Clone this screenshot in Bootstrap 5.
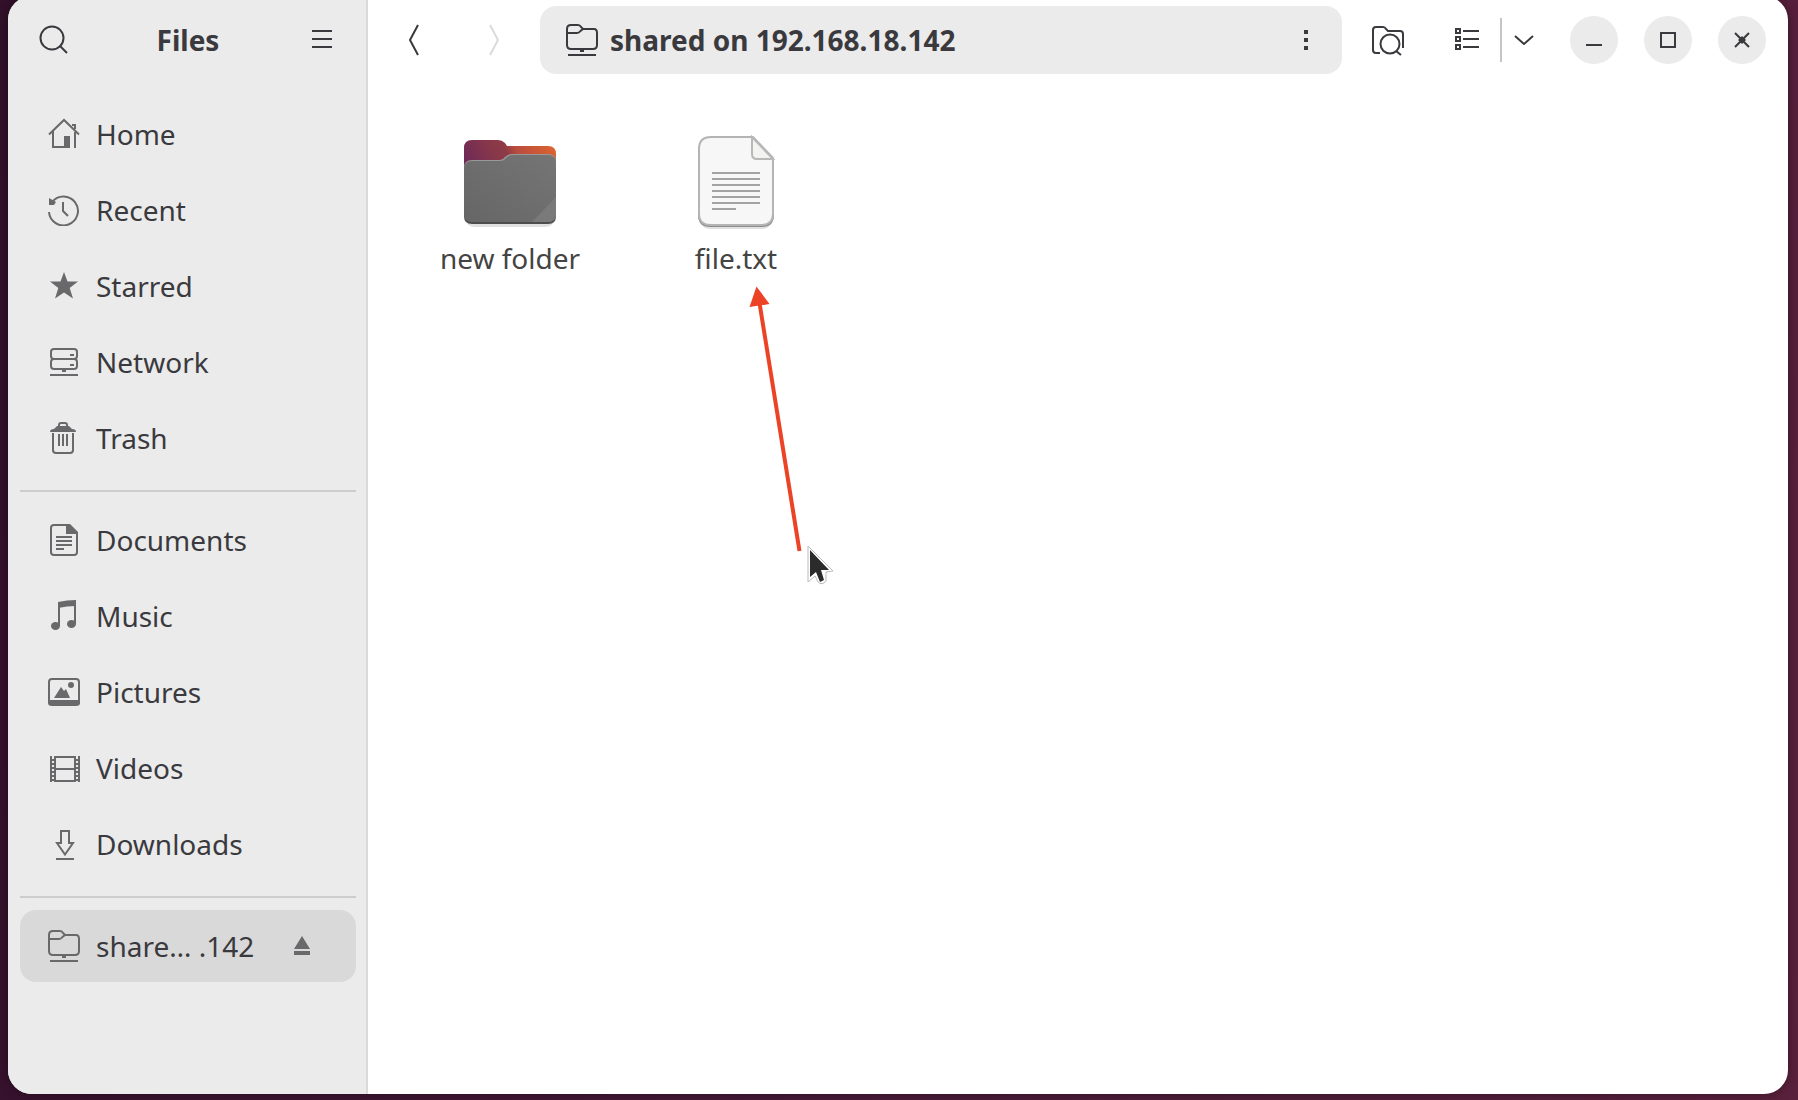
<!DOCTYPE html>
<html lang="en">
<head>
<meta charset="utf-8">
<meta name="viewport" content="width=device-width, initial-scale=1">
<title>Files</title>
<link href="https://cdn.jsdelivr.net/npm/bootstrap@5.3.0/dist/css/bootstrap.min.css" rel="stylesheet">
<style>
  body {
    font-family: "Noto Sans", "Open Sans", sans-serif;
    font-size: 28px;
    line-height: 36px;
    color: #3a3a3e;
    background: linear-gradient(100deg, #33102b 0%, #481b39 50%, #5a213c 100%);
  }
  .desktop { padding: 0 10px 6px 8px; }
  .app-window {
    margin-top: -4px;
    border-radius: 24px;
    background: #fff;
    box-shadow: 0 0 12px rgba(0, 0, 0, .4);
  }
  .side-pane { width: 360px; background: #ebebeb; border-right: 2px solid #dadada; padding: 0 10px 12px 12px; }
  .head-row { height: 84px; padding-top: 4px; }
  .title-text { font-size: 28px; line-height: 36px; }
  .tool-btn {
    width: 68px; height: 68px; padding: 0; border: 0; border-radius: 16px;
    display: flex; align-items: center; justify-content: center; color: #3a3a3e;
  }
  .tool-btn:disabled { color: #3a3a3e; border: 0; opacity: .18; }
  .view-btn { width: 66px; }
  .more-btn { width: 44px; }
  .win-btn { width: 48px; height: 48px; border-radius: 50%; background: #ebebeb; }
  .split-line { width: 2px; height: 44px; background: #c4c4c4; }
  .path-bar { height: 68px; background: #ebebeb; border-radius: 16px; padding: 0 2px 0 26px; }
  .main-head { padding-left: 12px; padding-right: 22px; gap: 12px; }
  .win-group { gap: 26px; margin-left: 12px; }
  .place-nav { padding-top: 18px; }
  .place-row {
    height: 72px; margin-bottom: 4px; padding: 0 0 0 28px; gap: 16px; border-radius: 16px;
    color: #3a3a3e; text-decoration: none;
  }
  .place-row svg { color: #69696b; }
  .place-row.current { background: #d9d9d9; }
  .place-row a { color: inherit; text-decoration: none; gap: 16px; }
  .eject-btn { width: 44px; margin-right: 32px; }
  .place-sep { height: 2px; background: #cdcdcd; margin: 12px 0; }
  .file-view { padding: 54px 35px; gap: 12px; }
  .file-tile { width: 214px; color: #444; text-decoration: none; gap: 10px; }
  .pointer-layer { left: 380px; top: 200px; pointer-events: none; }
  svg { display: block; flex: none; }
  .ln { fill: none; stroke: currentColor; stroke-width: 2; }
</style>
</head>
<body class="min-vh-100">
<svg width="0" height="0" class="position-absolute" aria-hidden="true">
  <symbol id="remote-folder" viewBox="0 0 32 32">
    <path class="ln" d="M1 9V5Q1 1 5 1H12Q14 1 15 3L17 5H28Q31 5 31 9V21Q31 25 27 25H5Q1 25 1 21V9H11Q13 9 14.500 7L17 5M2 31H30"/>
    <path fill="currentColor" d="M14 26h4v2h-4z"/>
  </symbol>
</svg>
<div class="desktop min-vh-100 d-flex">
<div class="app-window d-flex flex-grow-1 overflow-hidden">

  <aside class="side-pane flex-shrink-0">
    <header class="head-row d-flex align-items-center justify-content-between">
      <button class="btn tool-btn" type="button" aria-label="Search">
        <svg width="32" height="32"><circle class="ln" cx="14" cy="14" r="11.500"/><path class="ln" d="M21.500 21.500L29 29" stroke-width="3"/></svg>
      </button>
      <h1 class="title-text fw-bold m-0">Files</h1>
      <button class="btn tool-btn" type="button" aria-label="Menu">
        <svg width="20" height="20"><path class="ln" d="M0 1H20M0 9H20M0 17H20"/></svg>
      </button>
    </header>
    <nav class="place-nav d-flex flex-column" aria-label="Places">
      <a class="place-row d-flex align-items-center" href="#">
        <svg width="32" height="32"><path class="ln" d="M1 16.500L16 2L31 16.500M5 13V29H18M27 14V30M27 11V7H24"/><path fill="currentColor" d="M16 18h6v12h-6z"/></svg>
        Home</a>
      <a class="place-row d-flex align-items-center" href="#">
        <svg width="32" height="32"><path class="ln" d="M1 18A14.500 14.500 0 1 0 4 8M15 8V17L20 22"/><path fill="currentColor" d="M1 4L8 8L6 11L1 11z"/></svg>
        Recent</a>
      <a class="place-row d-flex align-items-center" href="#">
        <svg width="32" height="32"><path fill="currentColor" d="M16 2L19.500 11.500H30L21.700 18L25 28.500L16 22.500L7 28.500L10.300 18L2 11.500H12.500z"/></svg>
        Starred</a>
      <a class="place-row d-flex align-items-center" href="#">
        <svg width="32" height="32"><rect class="ln" x="3" y="3" width="26" height="10" rx="3"/><rect class="ln" x="3" y="13" width="26" height="10" rx="3"/><path class="ln" d="M22 9H26M22 19H26M14 25H18M2 29H30"/></svg>
        Network</a>
      <a class="place-row d-flex align-items-center" href="#">
        <svg width="32" height="32"><path class="ln" d="M11 5V3Q11 1 13 1H17Q19 1 19 3V5M5 11V28Q5 31 8 31H22Q25 31 25 28V11M11 12V24M15 12V24M19 12V24"/><path fill="currentColor" d="M2 10Q2 7 6 7L9 4H21L24 7Q28 7 28 10z"/></svg>
        Trash</a>
      <div class="place-sep"></div>
      <a class="place-row d-flex align-items-center" href="#">
        <svg width="32" height="32"><path class="ln" d="M20 1H6Q3 1 3 4V28Q3 31 6 31H26Q29 31 29 28V9M8 13H24M8 17H24M8 21H24M8 25H16"/><path fill="currentColor" d="M18 0H22L30 8V10H18z"/></svg>
        Documents</a>
      <a class="place-row d-flex align-items-center" href="#">
        <svg width="32" height="32"><path class="ln" d="M11 4V26M27 2V24"/><path fill="currentColor" d="M10 2Q19 0 28 0V6Q19 6 10 8z"/><ellipse cx="7.500" cy="26" rx="4.500" ry="4" fill="currentColor"/><ellipse cx="23.500" cy="24" rx="4.500" ry="4" fill="currentColor"/></svg>
        Music</a>
      <a class="place-row d-flex align-items-center" href="#">
        <svg width="32" height="32"><rect class="ln" x="1" y="3" width="30" height="25" rx="3"/><path fill="currentColor" d="M0 24H32V27Q32 30 28 30H4Q0 30 0 27zM6 22L13 11L16 15L18 13L22 22z"/><circle cx="23" cy="9" r="3" fill="currentColor"/></svg>
        Pictures</a>
      <a class="place-row d-flex align-items-center" href="#">
        <svg width="32" height="32"><path class="ln" d="M3 4V30M7 4V30M27 4V30M31 4V30M7 5H27M7 17H27M7 29H27"/><path class="ln" stroke-dasharray="2 2" d="M5 7V30M29 7V30"/></svg>
        Videos</a>
      <a class="place-row d-flex align-items-center" href="#">
        <svg width="32" height="32"><path class="ln" d="M13 15V3H21V15H25L17 26.500L9 15zM8 31H26"/></svg>
        Downloads</a>
      <div class="place-sep"></div>
      <div class="place-row current d-flex align-items-center">
        <a class="d-flex align-items-center flex-grow-1" href="#" aria-current="page">
          <svg width="32" height="32"><use href="#remote-folder"/></svg>
          share… .142</a>
        <button class="btn tool-btn eject-btn" type="button" aria-label="Eject">
          <svg width="16" height="20"><path fill="currentColor" d="M8 0L16 13H0zM0 15H16V19H0z"/></svg>
        </button>
      </div>
    </nav>
  </aside>

  <main class="flex-grow-1 position-relative">
    <header class="head-row main-head d-flex align-items-center">
      <button class="btn tool-btn" type="button" aria-label="Back">
        <svg width="12" height="32"><path class="ln" d="M10 1L2 16L10 31"/></svg>
      </button>
      <button class="btn tool-btn" type="button" aria-label="Forward" disabled>
        <svg width="12" height="32"><path class="ln" d="M2 1L10 16L2 31"/></svg>
      </button>
      <div class="path-bar d-flex align-items-center flex-grow-1">
        <svg width="32" height="32"><use href="#remote-folder"/></svg>
        <span class="fw-bold ps-2 ms-1 me-auto">shared on 192.168.18.142</span>
        <button class="btn tool-btn" type="button" aria-label="Folder menu">
          <svg width="4" height="20"><path fill="currentColor" d="M0 0h4v4H0zM0 8h4v4H0zM0 16h4v4H0z"/></svg>
        </button>
      </div>
      <button class="btn tool-btn" type="button" aria-label="Search in folder">
        <svg width="32" height="32"><path class="ln" d="M8 29H4Q1 29 1 26V6Q1 3 4 3H11Q13 3 14 5L16 7H28Q31 7 31 10V24"/><circle class="ln" cx="18" cy="20" r="9.500"/><path class="ln" d="M24 27L29 31"/></svg>
      </button>
      <div class="d-flex align-items-center">
        <button class="btn tool-btn view-btn" type="button" aria-label="List view">
          <svg width="24" height="24"><path class="ln" d="M1 1h4v4H1zM1 9h4v4H1zM1 17h4v4H1zM8 3H24M8 11H24M8 19H24"/></svg>
        </button>
        <div class="split-line"></div>
        <button class="btn tool-btn more-btn" type="button" aria-label="View options">
          <svg width="20" height="10"><path class="ln" d="M1 1L10 9L19 1"/></svg>
        </button>
      </div>
      <div class="win-group d-flex">
        <button class="btn tool-btn win-btn" type="button" aria-label="Minimize">
          <svg width="16" height="16"><path class="ln" d="M0 13H16"/></svg>
        </button>
        <button class="btn tool-btn win-btn" type="button" aria-label="Maximize">
          <svg width="16" height="16"><path class="ln" d="M1 1H15V15H1z"/></svg>
        </button>
        <button class="btn tool-btn win-btn" type="button" aria-label="Close">
          <svg width="16" height="16"><path class="ln" d="M1 1L15 15M15 1L1 15"/><path fill="currentColor" d="M8 4L12 8L8 12L4 8z"/></svg>
        </button>
      </div>
    </header>

    <div class="file-view d-flex flex-wrap">
      <a class="file-tile d-flex flex-column align-items-center" href="#">
        <svg width="96" height="96">
          <defs>
            <linearGradient id="fold-back" x1="0" x2="1" y1=".3" y2="0"><stop offset="0" stop-color="#702a56"/><stop offset=".3" stop-color="#87374a"/><stop offset=".45" stop-color="#8f3b47"/><stop offset=".55" stop-color="#b84c3e"/><stop offset="1" stop-color="#e2662f"/></linearGradient>
            <linearGradient id="fold-front" x1="0" x2="1" y1="1" y2="0"><stop offset="0" stop-color="#666"/><stop offset="1" stop-color="#757575"/></linearGradient>
          </defs>
          <rect x="3" y="60" width="90" height="33" rx="9" fill="#000" opacity=".12"/>
          <path fill="url(#fold-back)" d="M2 14Q2 6 10 6H36Q40 6 43 9L45 12H86Q94 12 94 20V60H2z"/>
          <path fill="#4d4d4d" d="M2 40H94V82Q94 90 86 90H10Q2 90 2 82z"/>
          <path fill="#999" d="M2 34Q2 26 10 26H38Q41 26 43 23Q46 20 50 20H86Q94 20 94 28V80H2z"/>
          <path fill="url(#fold-front)" d="M2 35Q2 27 10 27H38Q42 27 44 24Q47 21 51 21H86Q94 21 94 29V80Q94 88 86 88H10Q2 88 2 80z"/>
          <path fill="#7a7a7a" d="M94 63V80Q94 88 86 88H70z"/>
        </svg>
        <span>new folder</span>
      </a>
      <a class="file-tile d-flex flex-column align-items-center" href="#">
        <svg width="96" height="96">
          <rect x="11" y="50" width="74" height="45" rx="11" fill="#000" opacity=".12"/>
          <path fill="#8d8d8d" d="M10 40H86V81Q86 93 74 93H22Q10 93 10 81z"/>
          <path fill="#f7f7f7" stroke="#b4b4b4" stroke-width="2" d="M23 3H65L85 24V80Q85 91 73 91H23Q11 91 11 80V15Q11 3 23 3z"/>
          <path fill="#f3f3f2" stroke="#b8b8b8" stroke-width="2" d="M64 3V20Q64 25 69 25H85z"/>
          <path fill="none" stroke="#a3a3a3" stroke-width="2" d="M24 39H72M24 45H72M24 51H72M24 57H72M24 63H72M24 69H72M24 75H48"/>
        </svg>
        <span>file.txt</span>
      </a>
    </div>

    <!-- Arrow annotation and mouse pointer lying over the file area -->
    <svg class="pointer-layer position-absolute" width="100" height="400" viewBox="748 196 100 400" aria-hidden="true">
      <path stroke="#ec4326" stroke-width="4" d="M759.500 303L799.500 551"/>
      <path fill="#ec4326" d="M756.500 286.500L769.500 304L749.500 307z"/>
      <g stroke-linejoin="round">
        <path fill="#fff" stroke="#bbb" stroke-width="1" d="M808 546L833 571L826 572L826 581Q822 586 818 582L815 576L808 582z"/>
        <path fill="#2b2b2b" d="M810 550L829 570H821L824 580L820 582L816 572L810 577z"/>
      </g>
    </svg>
  </main>
</div>
</div>
<script src="https://cdn.jsdelivr.net/npm/bootstrap@5.3.0/dist/js/bootstrap.bundle.min.js"></script>
</body>
</html>
